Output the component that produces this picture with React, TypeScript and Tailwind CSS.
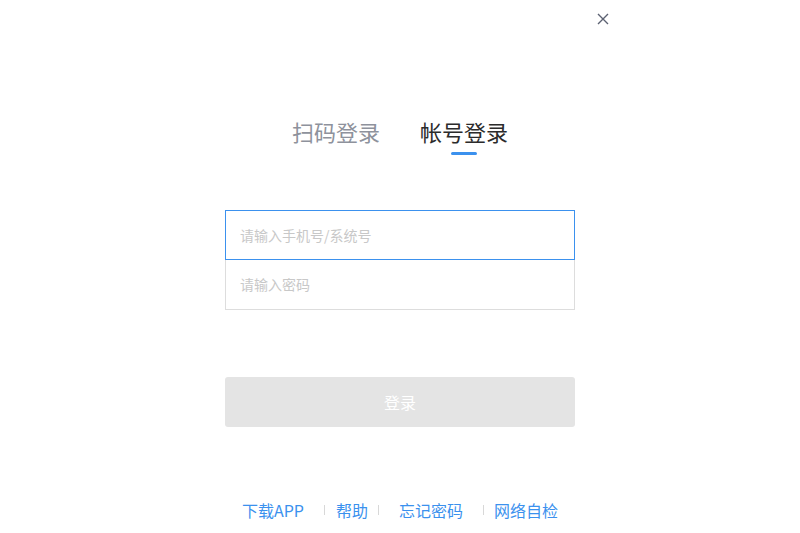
const font = { fontFamily: '"Noto Sans CJK SC", "Liberation Sans", sans-serif' };

const Sep = ({ className }: { className: string }) => (
  <span className={`inline-block h-[10px] w-px bg-[#d8d8d8] ${className}`} />
);

export default function App() {
  return (
    <div className="min-h-[533px] w-full bg-white" style={font}>
      <div className="mx-auto flex w-[450px] flex-col">
        {/* close */}
        <div className="flex justify-end pr-[16px] pt-[13px]">
          <button className="flex h-[12px] w-[12px] items-center justify-center text-[#5c6272]">
            <svg width="12" height="12" viewBox="0 0 12 12" fill="none" stroke="currentColor" strokeWidth="1.4">
              <path d="M1 1L11 11M11 1L1 11" />
            </svg>
          </button>
        </div>

        {/* tabs */}
        <div className="mt-[92px] flex justify-center gap-[40px]">
          <div className="flex flex-col items-center">
            <span className="text-[22px] leading-[28px] text-[#8e929c]">扫码登录</span>
          </div>
          <div className="flex flex-col items-center">
            <span className="text-[22px] leading-[28px] text-[#2b2b2b]">帐号登录</span>
            <span className="mt-[7px] h-[3px] w-[26px] rounded-full bg-[#3b91ee]" />
          </div>
        </div>

        {/* inputs */}
        <div className="mx-auto mt-[55px] flex w-[350px] flex-col">
          <div className="flex h-[50px] items-center border border-[#3b91ee] px-[14px]">
            <span className="text-[14px] text-[#c8c8c8]">请输入手机号/系统号</span>
          </div>
          <div className="flex h-[50px] items-center border border-t-0 border-[#dddddd] px-[14px]">
            <span className="text-[14px] text-[#c8c8c8]">请输入密码</span>
          </div>

          <button className="mt-[67px] flex h-[50px] items-center justify-center rounded-[3px] bg-[#e4e4e4] text-[16px] text-white">
            登录
          </button>
        </div>

        {/* footer */}
        <div className="mt-[71px] flex items-center justify-center text-[16px] text-[#3b91ee]">
          <span>下载APP</span>
          <Sep className="ml-[20px] mr-[11px]" />
          <span>帮助</span>
          <Sep className="ml-[10px] mr-[20px]" />
          <span>忘记密码</span>
          <Sep className="ml-[20px] mr-[10px]" />
          <span>网络自检</span>
        </div>
      </div>
    </div>
  );
}
